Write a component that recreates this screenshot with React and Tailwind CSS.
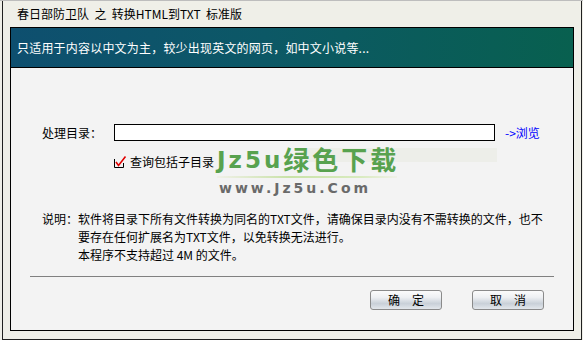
import React from "react";

const font = { fontFamily: '"Noto Sans CJK SC", "Liberation Sans", sans-serif' };

function Btn({ children }) {
  return (
    <div className="w-[72px] h-[20px] rounded-[3px] border border-[#8a8a8a] bg-[linear-gradient(to_bottom,#fbfbfb_0%,#eef0f3_35%,#c9d0d8_70%,#e3e7ec_100%)] flex items-center justify-center text-[12px] text-black leading-none tracking-[12px] pl-[12px]">
      {children}
    </div>
  );
}

export default function App() {
  return (
    <div className="w-[583px] h-[340px] bg-[#efefe8] border-t border-[#bdbdbd] overflow-hidden" style={font}>
      <div className="h-[339px] ml-[2px] w-[580px] border-l border-r border-b border-[#202020] flex flex-col">
        <div className="h-[26px] flex items-center pl-[14px] text-[12px] text-black leading-none whitespace-pre">
          春日部防卫队  之  转换HTML到TXT  标准版
        </div>
        <div className="relative ml-[7px] w-[564px] h-[304px] border border-black bg-[#f3f3f3] flex flex-col">
          <div className="h-[40px] border-b border-black bg-[linear-gradient(to_right,#0e4f6f_0%,#0c5866_45%,#08604f_100%)] flex items-center pl-[6px] text-white text-[12px] leading-none tracking-[0.2px]">
            只适用于内容以中文为主，较少出现英文的网页，如中文小说等...
          </div>
          <div className="flex items-center mt-[56px] h-[17px] text-[12px] leading-none">
            <span className="ml-[31px] w-[72px]">处理目录：</span>
            <div className="w-[381px] h-[17px] border border-black bg-white"></div>
            <span className="ml-[10px] text-[#0000ff]">-&gt;浏览</span>
          </div>
          <div className="flex items-center mt-[14px] h-[14px] text-[12px] leading-none">
            <svg className="ml-[103px]" width="13" height="12" viewBox="0 0 13 12">
              <path d="M0.5 3 V11.5 H9.5 V7" stroke="#000" strokeWidth="1" fill="none" />
              <path d="M2 6 L4.5 9.5 L11.5 0.5" stroke="#e00000" strokeWidth="1.6" fill="none" />
            </svg>
            <span className="ml-[3px] relative z-10">查询包括子目录</span>
          </div>
          <div className="flex mt-[41px] text-[12px] leading-[18px]">
            <span className="ml-[31px] w-[36px] shrink-0">说明：</span>
            <div className="flex flex-col whitespace-nowrap">
              <span>软件将目录下所有文件转换为同名的TXT文件，请确保目录内没有不需转换的文件，也不</span>
              <span>要存在任何扩展名为TXT文件，以免转换无法进行。</span>
              <span className="whitespace-pre">本程序不支持超过 4M 的文件。</span>
            </div>
          </div>
          <div className="ml-[19px] mt-[12px] w-[524px] h-0 border-t border-[#808080]"></div>
          <div className="flex mt-[13px] ml-[359px] gap-[30px]">
            <Btn>确定</Btn>
            <Btn>取消</Btn>
          </div>
          <div className="absolute left-[290px] top-[120px] w-[196px] h-[14px] bg-[#ebece6] opacity-80"></div>
          <div className="absolute left-[206px] top-[118px] flex flex-col pointer-events-none">
            <div className="flex items-end text-[#58a24f] font-semibold leading-none">
              <span className="text-[23px] tracking-[3px]" style={{ fontFamily: '"DejaVu Sans", sans-serif' }}>Jz5u</span>
              <span className="text-[26px] tracking-[3px]" style={font}>绿色下载</span>
            </div>
            <div className="w-[180px] h-[2px] mt-[4px] bg-[linear-gradient(to_right,#f0f0e8,#c9e2a8_40%,#d9ebc0_80%,#f0f0e8)]"></div>
            <div className="text-[14px] font-bold text-[#6a6a6a] tracking-[3px] leading-none mt-[3px] ml-[2px]" style={{ fontFamily: '"DejaVu Sans", sans-serif' }}>
              www.Jz5u.Com
            </div>
          </div>
        </div>
      </div>
    </div>
  );
}
